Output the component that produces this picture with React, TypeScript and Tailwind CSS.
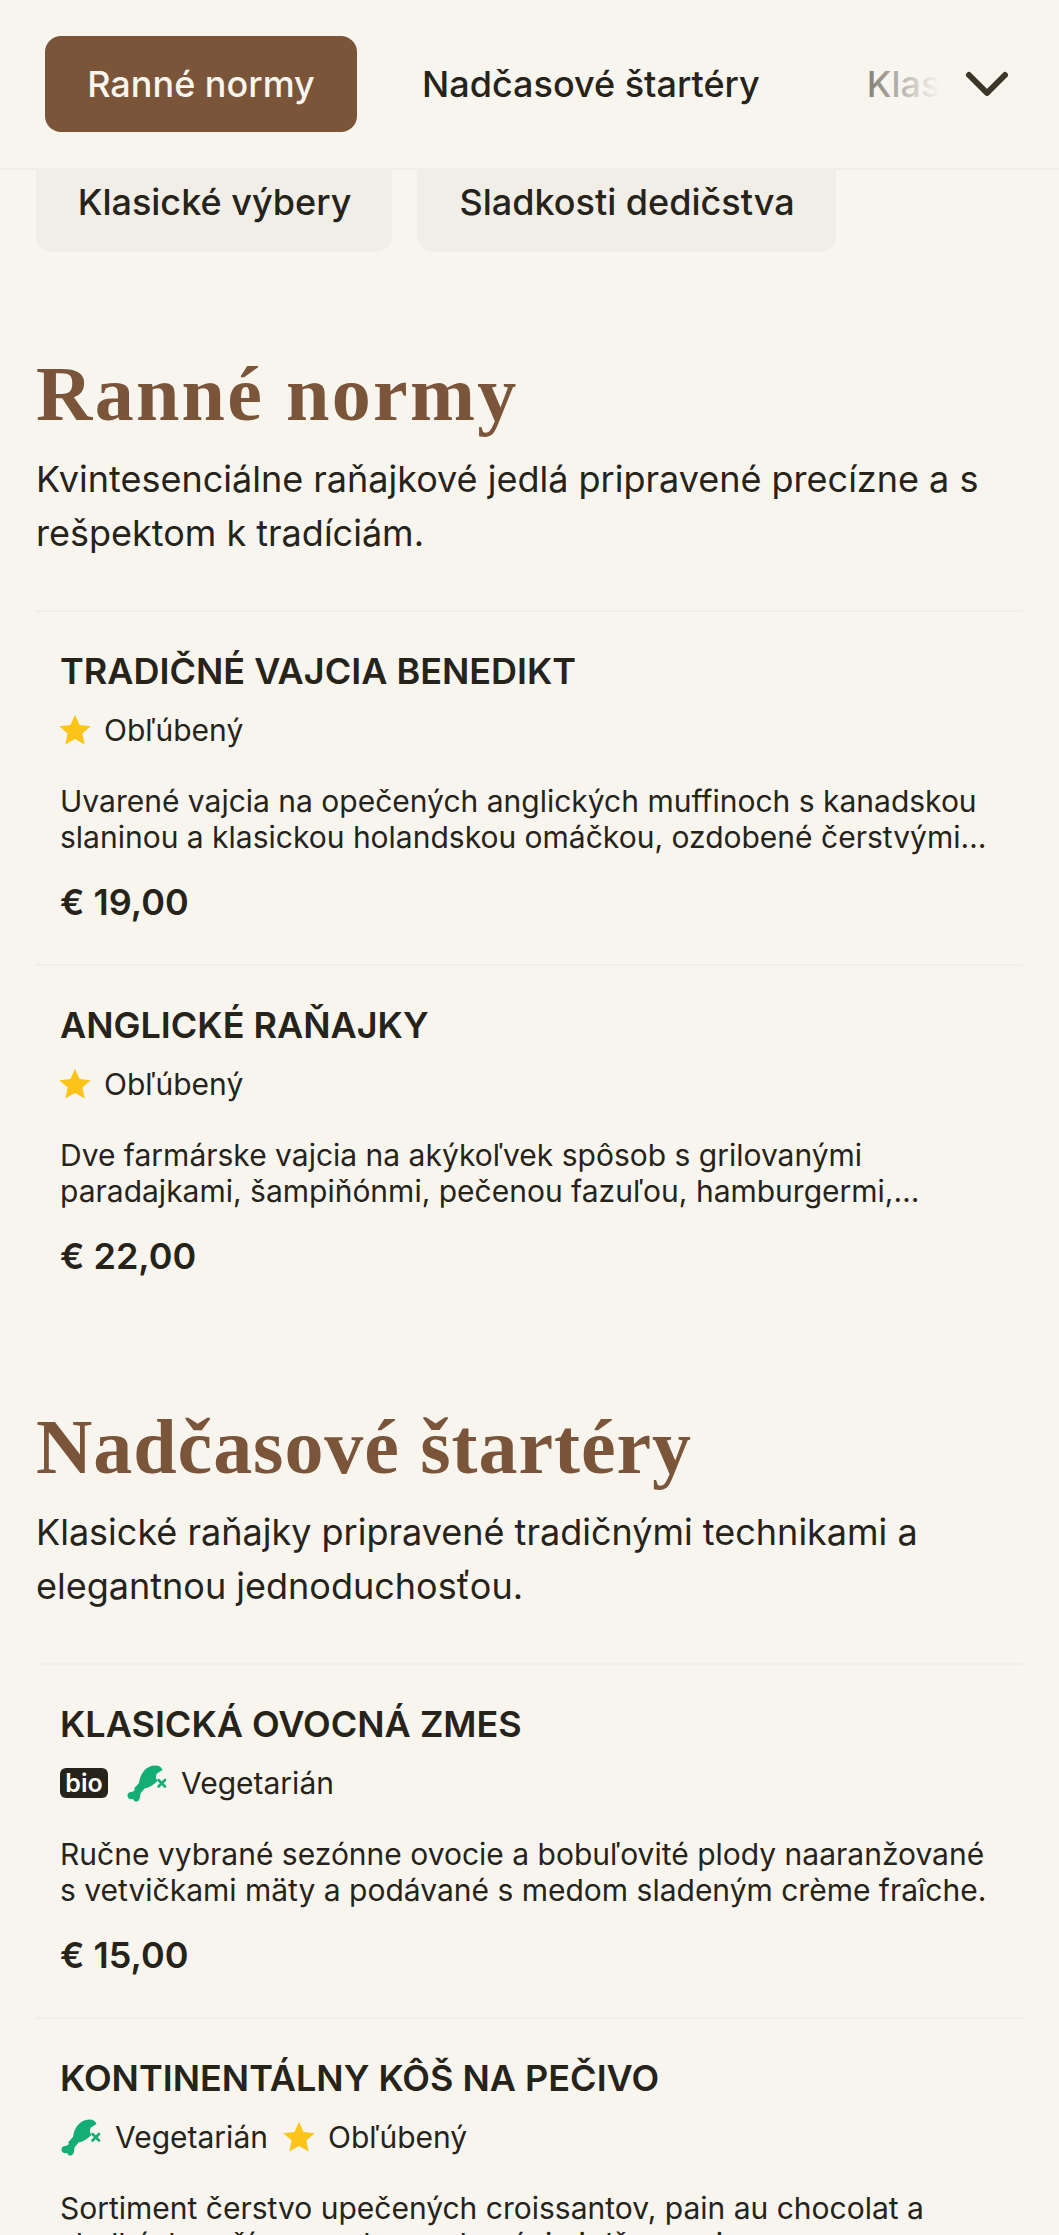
import { ChevronDown } from "lucide-react";

const inter = "font-['Inter','Noto_Sans',sans-serif]";

function Star() {
  return (
    <svg viewBox="0 0 24 24" className="w-[32px] h-[32px] shrink-0 -ml-[1px] text-[#fcc419]" fill="currentColor">
      <path d="M12 .6l3.400 7.700 8.400.8-6.300 5.600 1.800 8.200L12 18.700l-7.300 4.200 1.800-8.200L.2 9.100l8.400-.8z" />
    </svg>
  );
}

function NoMeat() {
  return (
    <svg viewBox="0 0 41 37" className="w-[41px] h-[37px] shrink-0 text-[#12ae76]" fill="currentColor">
      <path d="M8 23.500L13 18C14 9 20 .5 29 .5c4-.2 6.500 1.500 7.500 4.500L31 8.500c-1.500 2-1.500 5 .5 7.500-3.500 3.500-8 6.500-13 7.500l-4 5c-.5 2.500 0 4-1.500 6.500-1.500 2.500-5 2-5.800-1-2.700 1-5.400-.5-5.700-3-.2-2.500 1.500-4 3.500-4s3-1 4-2.500z" />
      <path d="M32.500 15l6.500 6.500m0-6.500l-6.500 6.500" stroke="currentColor" strokeWidth="2.600" strokeLinecap="round" fill="none" />
    </svg>
  );
}

function Tag({ kind }: { kind: string }) {
  if (kind === "star") {
    return (
      <span className="flex items-center gap-[13px]">
        <Star />
        <span>Obľúbený</span>
      </span>
    );
  }
  if (kind === "veg") {
    return (
      <span className="flex items-center gap-[14px]">
        <NoMeat />
        <span>Vegetarián</span>
      </span>
    );
  }
  return (
    <span className="flex items-center justify-center w-[48px] h-[30px] mr-[2px] rounded-[6px] bg-[#26231a] text-white text-[25px] font-semibold leading-none">
      bio
    </span>
  );
}

type Item = { title: string; tags: string[]; desc: string; price?: string };

function MenuItem({ item }: { item: Item }) {
  return (
    <div className="border-t-2 border-[#f1eee8] pt-[37px] px-[24px] h-[354px]">
      <h3 className="text-[36px] leading-[44px] font-semibold text-[#26231a] uppercase">{item.title}</h3>
      <div className="flex items-center gap-[16px] mt-[15px] h-[44px] text-[30px] text-[#26231a]">
        {item.tags.map((t) => (
          <Tag key={t} kind={t} />
        ))}
      </div>
      <p className="mt-[31px] text-[30px] leading-[36px] text-[#26231a] line-clamp-2">{item.desc}</p>
      {item.price && <p className="mt-[25px] text-[36px] leading-[44px] font-semibold text-[#26231a]">{item.price}</p>}
    </div>
  );
}

const ranne: Item[] = [
  {
    title: "Tradičné vajcia Benedikt",
    tags: ["star"],
    desc: "Uvarené vajcia na opečených anglických muffinoch s kanadskou slaninou a klasickou holandskou omáčkou, ozdobené čerstvými bylinkami a podávané s opekanými zemiakmi.",
    price: "€ 19,00",
  },
  {
    title: "Anglické raňajky",
    tags: ["star"],
    desc: "Dve farmárske vajcia na akýkoľvek spôsob s grilovanými paradajkami, šampiňónmi, pečenou fazuľou, hamburgermi, slaninou a opečeným toastom s maslom.",
    price: "€ 22,00",
  },
];

const startery: Item[] = [
  {
    title: "Klasická ovocná zmes",
    tags: ["bio", "veg"],
    desc: "Ručne vybrané sezónne ovocie a bobuľovité plody naaranžované s vetvičkami mäty a podávané s medom sladeným crème fraîche.",
    price: "€ 15,00",
  },
  {
    title: "Kontinentálny kôš na pečivo",
    tags: ["veg", "star"],
    desc: "Sortiment čerstvo upečených croissantov, pain au chocolat a sladkých pečív s maslom a domácimi džemami.",
  },
];

export default function App() {
  return (
    <div className={`h-[2235px] overflow-hidden bg-[#f8f5ef] text-[#26231a] ${inter}`}>
      <header className="relative z-10 h-[170px] bg-[#f8f5ef] border-b-2 border-[#f1eee8] flex items-center pl-[45px] pb-[1px]">
        <div className="flex items-center gap-[34px] flex-1 overflow-hidden whitespace-nowrap text-[36px] font-medium">
          <button className="w-[312px] h-[96px] shrink-0 rounded-[16px] bg-[#7b5539] text-[#f8f5ef]">Ranné normy</button>
          <span className="px-[31px] shrink-0">Nadčasové štartéry</span>
          <span className="pl-[42px] shrink-0">Klasické výbery</span>
        </div>
        {/* fade over the scrolling tabs */}
        <div className="absolute top-0 bottom-0 right-[119px] w-[130px] bg-gradient-to-l from-[#f8f5ef] to-transparent" />
        <div className="absolute top-0 bottom-0 right-0 w-[119px] bg-[#f8f5ef] flex items-center">
          <ChevronDown className="w-[72px] h-[72px] ml-[11px] text-[#3a3729]" strokeWidth={2} />
        </div>
      </header>

      <div className="-mt-[20px] flex gap-[25px] pl-[36px] text-[36px] font-medium">
        <span className="w-[356px] h-[102px] pt-[1px] pl-[1px] rounded-[16px] bg-[#f1eee8] flex items-center justify-center">Klasické výbery</span>
        <span className="w-[419px] h-[102px] pt-[1px] pl-[1px] rounded-[16px] bg-[#f1eee8] flex items-center justify-center">Sladkosti dedičstva</span>
      </div>

      <main className="px-[36px]">
        <section className="mt-[98px] h-[1053px]">
          <h2 className="text-[78px] leading-[88px] font-bold text-[#7b5539] tracking-[2.300px] font-['Liberation_Serif',serif]">Ranné normy</h2>
          <p className="mt-[14px] text-[36px] leading-[54px]">Kvintesenciálne raňajkové jedlá pripravené precízne a s rešpektom k tradíciám.</p>
          <div className="mt-[50px]">
            {ranne.map((it) => (
              <MenuItem key={it.title} item={it} />
            ))}
          </div>
        </section>
        <section>
          <h2 className="text-[78px] leading-[88px] font-bold text-[#7b5539] tracking-[0.950px] font-['Liberation_Serif',serif]">Nadčasové štartéry</h2>
          <p className="mt-[14px] text-[36px] leading-[54px]">Klasické raňajky pripravené tradičnými technikami a elegantnou jednoduchosťou.</p>
          <div className="mt-[50px]">
            {startery.map((it) => (
              <MenuItem key={it.title} item={it} />
            ))}
          </div>
        </section>
      </main>
    </div>
  );
}
